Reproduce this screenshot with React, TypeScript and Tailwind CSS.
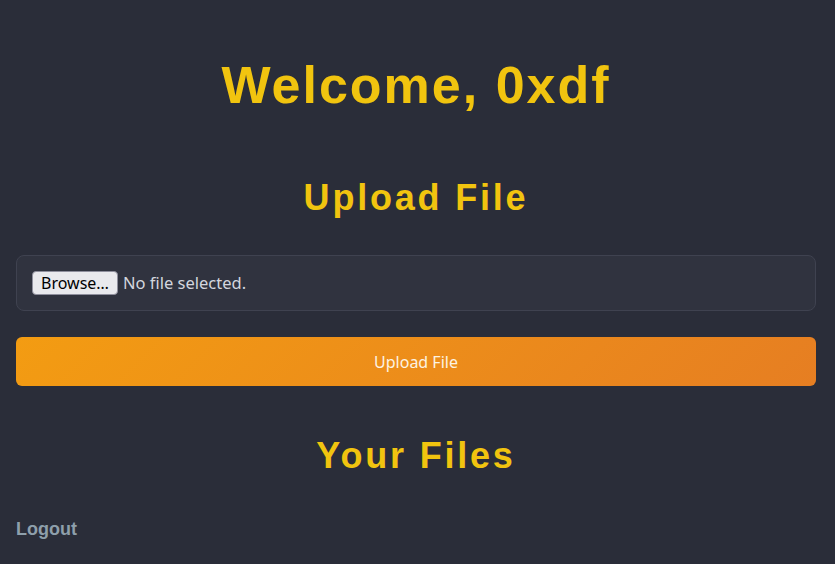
export default function App() {
  const heading = "font-['Liberation_Sans',Arial,sans-serif] font-bold text-[#f1c40f] text-center";
  const ui = "font-['Noto_Sans','Open_Sans',sans-serif]";
  return (
    <div className="min-h-[564px] w-full bg-[#2a2d39] pt-[59px]">
      <div className="ml-4 flex w-[800px] flex-col">
        <h1 className={`${heading} text-[52px] leading-[52px] tracking-[2px]`}>Welcome, 0xdf</h1>
        <h2 className={`${heading} mt-[69px] text-[36px] leading-[36px] tracking-[2.8px]`}>Upload File</h2>
        <div className="mt-[39px] flex h-[56px] items-center rounded-[8px] border border-[#3f4250] bg-[#30333f] px-[15px]">
          <span className={`${ui} flex h-[24px] w-[86px] items-center justify-center rounded-[4px] border border-[#8f8f9d] bg-[#e9e9ed] text-[16px] text-black`}>
            Browse…
          </span>
          <span className={`${ui} ml-[5px] text-[16.5px] text-[#d3d6de]`}>No file selected.</span>
        </div>
        <button className={`${ui} mt-[26px] h-[49px] w-full rounded-[6px] bg-[linear-gradient(135deg,#f39c12,#e67e22)] text-[16px] text-[#fdf3e3]`}>
          Upload File
        </button>
        <h2 className={`${heading} mt-[52px] text-[36px] leading-[36px] tracking-[2.8px]`}>Your Files</h2>
        <div className="mt-[43px]">
          <a className="font-['Liberation_Sans',Arial,sans-serif] text-[18px] font-bold leading-[18px] text-[#8e9fab]">Logout</a>
        </div>
      </div>
    </div>
  );
}
